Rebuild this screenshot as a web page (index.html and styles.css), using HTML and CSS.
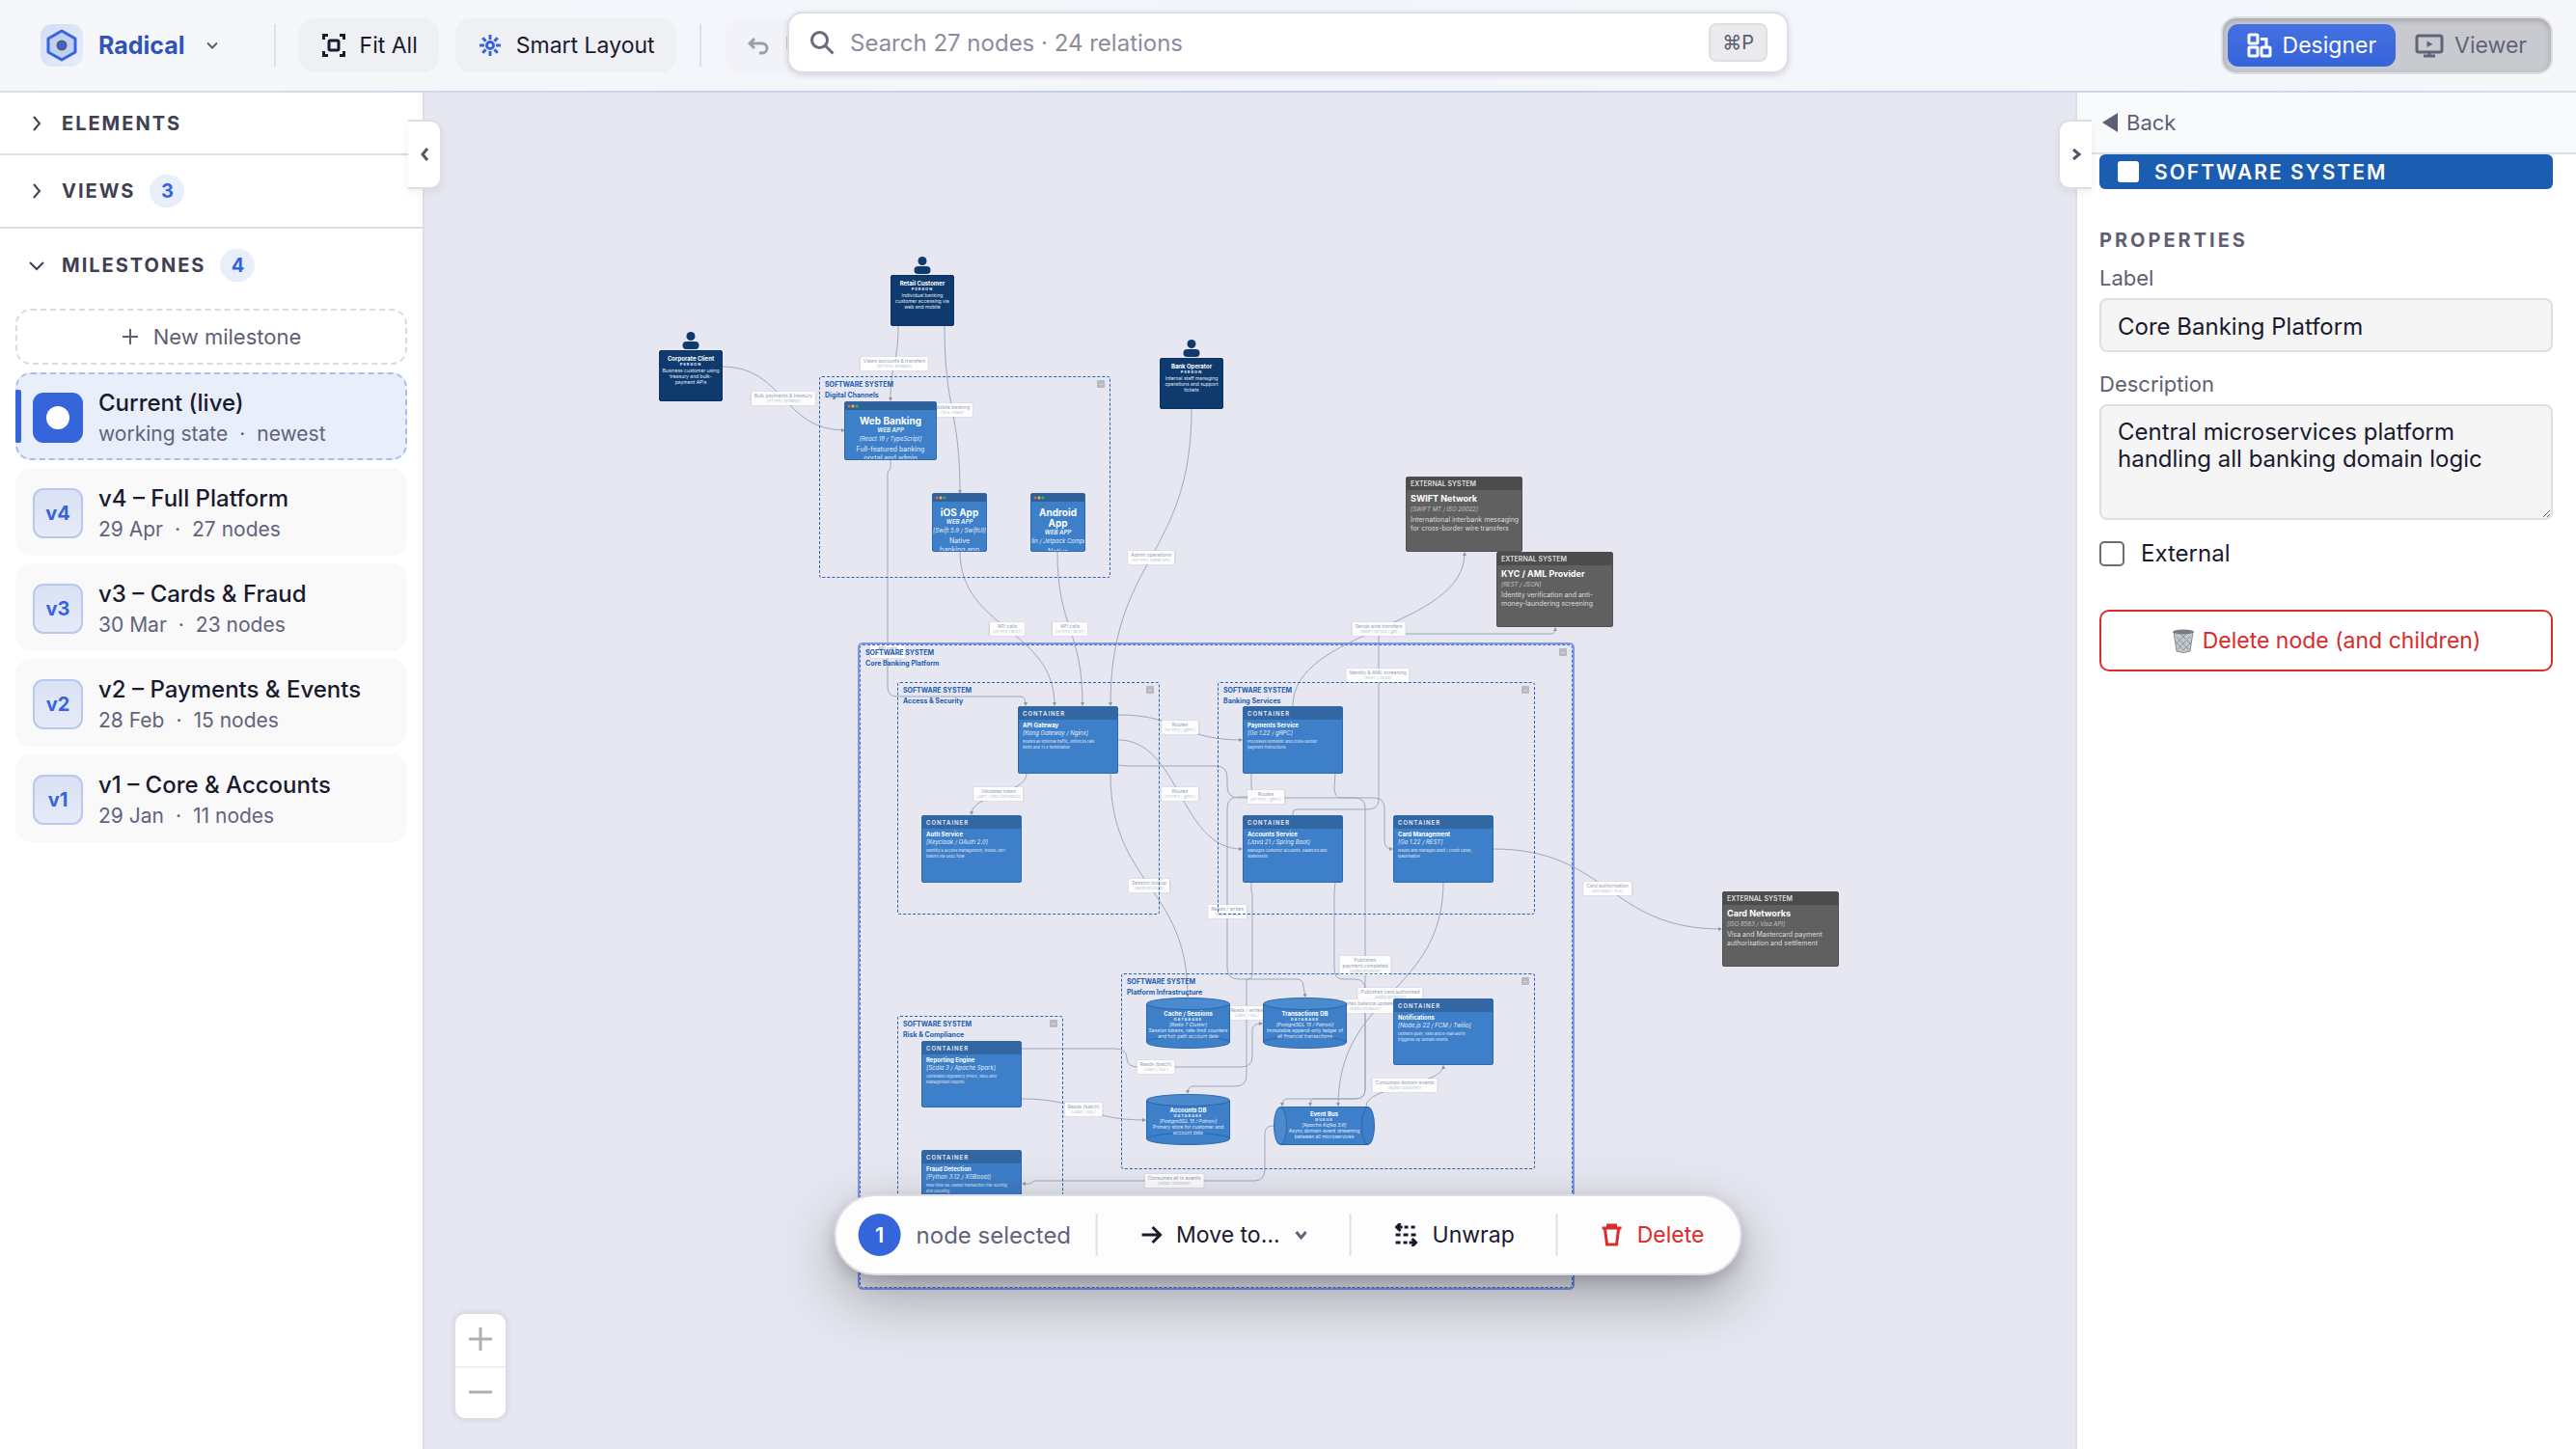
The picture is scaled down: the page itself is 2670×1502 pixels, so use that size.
FILE: index.html
```html
<!DOCTYPE html>
<html lang="en">
<head>
  <meta charset="UTF-8">
  <title>Radical</title>
  <meta name="viewport" content="width=device-width, initial-scale=1.0">
  <link rel="stylesheet" href="styles.css">
</head>
<body>

  <header class="topbar">
    <button class="brand">
      <span class="logo">
        <svg viewBox="0 0 44 44" width="44" height="44"><path d="M22 7l14 8v14l-14 8-14-8V15z" fill="#c0d0f2" stroke="#3564db" stroke-width="3" stroke-linejoin="round"/><circle cx="22" cy="22" r="4.5" fill="#3564db"/></svg>
      </span>
      <span class="brand-name">Radical</span>
      <svg class="brand-caret" viewBox="0 0 12 12" width="12" height="12"><path d="M1 3.5l5 5 5-5"/></svg>
    </button>
    <span class="divider"></span>
    <button class="tool">
      <svg viewBox="0 0 24 24" width="24" height="24"><path d="M1.5 6V1.5H6M18 1.5h4.5V6M22.5 18v4.5H18M6 22.5H1.5V18"/><rect x="7" y="7" width="10" height="10" rx="1.5"/></svg>
      Fit All
    </button>
    <button class="tool smart">
      <svg viewBox="0 0 24 24" width="24" height="24"><circle cx="12" cy="12" r="3.5"/><path d="M12 1v5M12 18v5M1 12h5M18 12h5M4.2 4.2l3.4 3.4M16.4 16.4l3.4 3.4M4.2 19.8l3.4-3.4M16.4 7.6l3.4-3.4"/></svg>
      Smart Layout
    </button>
    <span class="divider"></span>
    <button class="tool" disabled>
      <svg viewBox="0 0 24 24" width="24" height="24"><path d="M7 5L2 10l5 5M2 10h13a5 5 0 0 1 0 10h-3"/></svg>
      Undo
    </button>

    <div class="modes">
      <button class="mode active">
        <svg viewBox="0 0 26 26" width="26" height="26"><rect x="2" y="2" width="9" height="9" rx="1"/><rect x="2" y="15" width="9" height="9" rx="1"/><rect x="15" y="15" width="9" height="9" rx="1"/><path d="M14 6.5h6V15"/></svg>
        Designer
      </button>
      <button class="mode">
        <svg viewBox="0 0 30 26" width="30" height="26"><rect x="2" y="3" width="26" height="17" rx="2"/><path d="M15 20v4M9 24h12"/><path d="M12.5 8.5l6 3.2-6 3.2z" fill="currentColor" stroke="none"/></svg>
        Viewer
      </button>
    </div>
  </header>

  <div class="search">
    <svg viewBox="0 0 26 26" width="26" height="26"><circle cx="10.5" cy="10.5" r="8"/><path d="M16.5 16.5l8 8"/></svg>
    <input type="text" aria-label="Search" placeholder="Search 27 nodes · 24 relations">
    <kbd>⌘P</kbd>
  </div>

  <div class="workspace">
    <aside class="sidebar">
      <button class="section first">
        <svg viewBox="0 0 16 16" width="16" height="16"><path d="M5 1l6 7-6 7"/></svg>
        Elements
      </button>
      <button class="section">
        <svg viewBox="0 0 16 16" width="16" height="16"><path d="M5 1l6 7-6 7"/></svg>
        Views <span class="count">3</span>
      </button>
      <button class="section open">
        <svg viewBox="0 0 16 16" width="16" height="16"><path d="M1 5l7 7 7-7"/></svg>
        Milestones <span class="count">4</span>
      </button>

      <div class="milestones">
        <button class="new-milestone">
          <svg viewBox="0 0 18 18" width="18" height="18"><path d="M9 1v16M1 9h16"/></svg>
          New milestone
        </button>
        <button class="milestone current">
          <span class="version"><span class="live-dot"></span></span>
          <span class="info"><strong>Current (live)</strong><small>working state<i>·</i>newest</small></span>
        </button>
        <button class="milestone">
          <span class="version">v4</span>
          <span class="info"><strong>v4 – Full Platform</strong><small>29 Apr<i>·</i>27 nodes</small></span>
        </button>
        <button class="milestone">
          <span class="version">v3</span>
          <span class="info"><strong>v3 – Cards &amp; Fraud</strong><small>30 Mar<i>·</i>23 nodes</small></span>
        </button>
        <button class="milestone">
          <span class="version">v2</span>
          <span class="info"><strong>v2 – Payments &amp; Events</strong><small>28 Feb<i>·</i>15 nodes</small></span>
        </button>
        <button class="milestone">
          <span class="version">v1</span>
          <span class="info"><strong>v1 – Core &amp; Accounts</strong><small>29 Jan<i>·</i>11 nodes</small></span>
        </button>
      </div>
      <button class="collapse left" aria-label="Collapse sidebar">
        <svg viewBox="0 0 16 16" width="16" height="16"><path d="M11 2L6 8l5 6"/></svg>
      </button>
    </aside>

    <main class="canvas" id="canvas">
      <div class="zoom-controls">
        <button aria-label="Zoom in"><svg viewBox="0 0 24 24" width="24" height="24"><path d="M12 0v24M0 12h24"/></svg></button>
        <button aria-label="Zoom out"><svg viewBox="0 0 24 24" width="24" height="24"><path d="M0 12h24"/></svg></button>
      </div>
    </main>

    <aside class="panel">
      <a class="back" href="#">
        <svg viewBox="0 0 16 20" width="16" height="20"><path d="M16 0v20L0 10z"/></svg>
        Back
      </a>
      <div class="panel-body">
        <div class="type-bar"><span class="type-icon"></span>Software System</div>
        <h2>Properties</h2>
        <label for="nodeLabel">Label</label>
        <input type="text" id="nodeLabel" value="Core Banking Platform">
        <label for="nodeDesc">Description</label>
        <textarea id="nodeDesc">Central microservices platform handling all banking domain logic</textarea>
        <label class="check"><input type="checkbox"> External</label>
        <button class="delete-node">
          <svg viewBox="0 0 24 26" width="24" height="26"><path d="M2 4h20l-3 20q-7 3-14 0z" fill="#c3c8cc" stroke="#858b90" stroke-width="1"/><path d="M5 9l13 14M9 6l11 11M4 14l8 9M19 9L6 22M15 6L5 16M20 15l-8 8" stroke="#8d9499" stroke-width="1"/><ellipse cx="12" cy="4" rx="11" ry="2.5" fill="#777d82" stroke="none"/></svg>
          Delete node (and children)
        </button>
      </div>
      <button class="collapse right" aria-label="Collapse panel">
        <svg viewBox="0 0 16 16" width="16" height="16"><path d="M5 3l6 5-6 5"/></svg>
      </button>
    </aside>
  </div>

  <div class="selection-bar">
    <span class="selected-count">1</span>
    <span class="selected-text">node selected</span>
    <span class="divider"></span>
    <button>
      <svg viewBox="0 0 22 22" width="22" height="22"><path d="M1 11h19M12 3l8 8-8 8"/></svg>
      Move to…
      <svg class="caret" viewBox="0 0 14 14" width="14" height="14"><path d="M2 4l5 6 5-6"/></svg>
    </button>
    <span class="divider"></span>
    <button>
      <svg viewBox="0 0 24 24" width="24" height="24"><path d="M6 0L2 4l4 4M2 4h6M10 4h4M17 4h4M1 12h5M9 12h5M17 12h5M1 20h5M9 20h4M15 20h7M18 16l4 4-4 4"/></svg>
      Unwrap
    </button>
    <span class="divider"></span>
    <button class="danger">
      <svg viewBox="0 0 22 24" width="22" height="24"><path d="M1 5h20M7 4V2h8v2M4 6l2 16h10l2-16"/></svg>
      Delete
    </button>
  </div>

  <script src="script.js"></script>
</body>
</html>
```
FILE: styles.css
```css
* {
  box-sizing: border-box;
  font-family: Inter, "Noto Sans", sans-serif;
}

body {
  margin: 0;
  height: 100vh;
  display: flex;
  flex-direction: column;
  overflow: hidden;
  position: relative;
  background: #fff;
  color: #1a1a2e;
  font-size: 24px;
}

button {
  border: none;
  background: none;
  padding: 0;
  color: inherit;
  font-size: 23px;
  cursor: pointer;
}

svg {
  fill: none;
  stroke: currentColor;
  stroke-width: 2;
  flex-shrink: 0;
}

/* Top bar */
.topbar {
  display: flex;
  align-items: center;
  height: 96px;
  padding: 0 24px 0 42px;
  background: linear-gradient(to right, #f6f7fa, #f3f5fc 50%, #f6f7fb);
  border-bottom: 2px solid;
  border-image: linear-gradient(to right, #dcdfe8, #bfcbe8 50%, #d8dbea) 1;
}

.brand {
  display: flex;
  align-items: center;
  gap: 16px;
  margin-right: 58px;
  color: #5c5c70;
}

.logo {
  height: 44px;
  border-radius: 12px;
  background: linear-gradient(135deg, #d3ddf5, #e6edfa);
}

.brand-name {
  font-size: 25px;
  font-weight: 700;
  color: #2f55b8;
}

.brand-caret {
  margin-left: 6px;
}

.divider {
  width: 2px;
  height: 44px;
  background: #dfe0e8;
}

.tool {
  display: flex;
  align-items: center;
  gap: 15px;
  height: 56px;
  margin-left: 24px;
  padding: 0 22px 0 24px;
  border-radius: 16px;
  background: #eff0f4;
}

.tool svg {
  stroke-width: 3;
}

.tool + .tool {
  margin-left: 17px;
}

.tool.smart svg {
  color: #3564db;
}

.tool + .divider {
  margin-left: 24px;
}

.tool:disabled {
  opacity: .4;
}

.modes {
  display: flex;
  align-items: center;
  height: 60px;
  margin-left: auto;
  padding: 0 5px;
  border: 2px solid #dcdde2;
  border-radius: 16px;
  background: #c9cacf;
  box-shadow: inset 0 2px 6px rgba(0,0,0,0.2);
}

.mode {
  display: flex;
  align-items: center;
  gap: 11px;
  height: 44px;
  padding: 0 20px;
  border-radius: 11px;
  color: #62637a;
}

.mode svg {
  stroke-width: 3;
}

.mode.active {
  background: linear-gradient(#4470e0, #3564db);
  color: #fff;
}

/* Search lies over the top bar */
.search {
  position: absolute;
  top: 12px;
  left: 50%;
  transform: translateX(-50%);
  z-index: 2;
  display: flex;
  align-items: center;
  gap: 16px;
  width: 1038px;
  max-width: 60%;
  height: 64px;
  padding: 0 20px 0 21px;
  border: 2px solid #dcdfe8;
  border-radius: 16px;
  background: #fff;
  box-shadow: 0 2px 6px rgba(0,0,0,0.14);
  color: #6a6a7a;
}

.search svg {
  stroke-width: 3;
}

.search input {
  flex: 1;
  border: none;
  outline: none;
  background: none;
  padding: 0;
  font-size: 24px;
}

.search input::placeholder {
  color: #8c8c9c;
}

.search kbd {
  padding: 0 12px;
  border: 2px solid #dcdfe5;
  border-radius: 8px;
  background: #ebebee;
  font-size: 20px;
  line-height: 36px;
  color: #5c5c70;
}

.workspace {
  flex: 1;
  display: flex;
  min-height: 0;
}

/* Sidebar */
.sidebar {
  position: relative;
  z-index: 1;
  width: 440px;
  flex-shrink: 0;
  border-right: 2px solid #dcdfe6;
  background: #fff;
}

.section {
  display: flex;
  align-items: center;
  width: 100%;
  height: 76px;
  padding: 0 30px;
  border-bottom: 2px solid #dcdfe6;
  font-size: 20px;
  font-weight: 700;
  letter-spacing: 2px;
  text-transform: uppercase;
  color: #3f4052;
}

.section svg {
  margin-right: 18px;
}

.section.first {
  height: 65px;
}

.section.open {
  height: 75px;
  border-bottom: none;
}

.count {
  margin-left: 15px;
  width: 36px;
  border-radius: 17px;
  background: #e9eefb;
  color: #3564db;
  line-height: 34px;
  letter-spacing: 0;
  text-align: center;
}

.milestones {
  display: flex;
  flex-direction: column;
  gap: 8px;
  padding: 8px 16px;
}

.new-milestone {
  display: flex;
  align-items: center;
  justify-content: center;
  gap: 15px;
  height: 58px;
  border: 2px dashed #d9dbe2;
  border-radius: 16px;
  font-size: 22px;
  color: #5f5f73;
}

.milestone {
  position: relative;
  display: flex;
  align-items: center;
  gap: 16px;
  height: 91px;
  padding: 2px 16px 0;
  border: 2px solid transparent;
  border-radius: 16px;
  background: #f9f9fa;
  text-align: left;
}

.milestone.current {
  border: 2px dashed #a9bdf0;
  background: #e9eefb;
}

.milestone.current::before {
  content: "";
  position: absolute;
  left: -2px;
  top: 16px;
  width: 6px;
  height: 55px;
  border-radius: 2px;
  background: #3564db;
}

.version {
  display: flex;
  align-items: center;
  justify-content: center;
  width: 52px;
  height: 52px;
  border: 2px solid #b9c8ee;
  border-radius: 11px;
  background: linear-gradient(#d9e1f4, #e6ebf8);
  font-size: 20px;
  font-weight: 700;
  color: #3564db;
}

.current .version {
  border: none;
  background: #3564db;
}

.live-dot {
  width: 24px;
  height: 24px;
  border-radius: 50%;
  background: #fff;
}

.info strong,
.info small {
  display: block;
}

.info strong {
  font-size: 24px;
  line-height: 34px;
  font-weight: 500;
}

.info small {
  font-size: 21px;
  line-height: 30px;
  color: #62637a;
}

.info i {
  margin: 0 12px;
  font-style: normal;
}

.collapse {
  position: absolute;
  top: 28px;
  display: flex;
  align-items: center;
  justify-content: center;
  width: 35px;
  height: 72px;
  border: 2px solid #dcdfe6;
  background: #fff;
  box-shadow: 0 4px 8px rgba(0,0,0,0.06);
  color: #55566a;
}

.collapse svg {
  stroke-width: 3;
}

.collapse.left {
  right: -20px;
  border-left: none;
  border-radius: 0 12px 12px 0;
}

.collapse.right {
  left: -20px;
  border-right: none;
  border-radius: 12px 0 0 12px;
}

/* Canvas */
.canvas {
  position: relative;
  flex: 1;
  overflow: hidden;
  background: #e6e7f0;
}

.edges {
  position: absolute;
  left: 0;
  top: 0;
  color: #9ba9bd;
  stroke-width: 1;
}

.edges marker path {
  fill: #8797b0;
  stroke: none;
}

.edge-label {
  position: absolute;
  transform: translate(-50%, -50%);
  padding: 1px 3px;
  border-radius: 1px;
  background: #fdfdfe;
  box-shadow: 0 0 2px rgba(0,0,0,0.12);
  font-size: 5px;
  line-height: 6px;
  text-align: center;
  white-space: nowrap;
  color: #94a0b6;
}

.edge-label em {
  display: block;
  font-size: 4px;
  color: #b3bdcc;
}

.group {
  position: absolute;
  border: 1px dashed #2465b5;
  border-radius: 3px;
  padding: 4px 5px;
  color: #1d5db0;
  font-size: 7px;
  line-height: 12px;
  font-weight: 700;
}

.group span {
  display: block;
  margin-bottom: 1px;
  line-height: 8px;
}

.group.selected {
  border-color: #3f6be0;
  outline: 2px solid #7d98e6;
}

.group::after {
  content: "–";
  position: absolute;
  top: 3px;
  right: 5px;
  width: 8px;
  height: 8px;
  border-radius: 1px;
  background: #b9babf;
  color: #e6e7f0;
  font-size: 6px;
  line-height: 8px;
  text-align: center;
}

.node {
  position: absolute;
  border: 1px solid #2f69ae;
  border-radius: 2px;
  background: #3d7fc9;
  color: #e3edf8;
  font-size: 5px;
  line-height: 6px;
  white-space: nowrap;
}

.node b,
.node u,
.node em {
  display: block;
}

.node u {
  text-decoration: none;
  font-weight: 700;
}

.node b {
  color: #fff;
}

.person {
  padding-top: 4px;
  border-color: #0b3263;
  background: #0f3a6d;
  text-align: center;
}

.person b {
  font-size: 6px;
  line-height: 7px;
}

.person u {
  font-size: 4px;
  letter-spacing: 1px;
}

.person::before,
.person::after {
  content: "";
  position: absolute;
  left: 50%;
  transform: translateX(-50%);
  background: #0f3a6d;
}

.person::before {
  top: -20px;
  width: 9px;
  height: 9px;
  border-radius: 50%;
}

.person::after {
  top: -10px;
  width: 17px;
  height: 8px;
  border-radius: 4px;
}

.app {
  overflow: hidden;
  text-align: center;
  font-size: 7px;
  line-height: 9px;
}

.app::before {
  content: "";
  display: block;
  height: 8px;
  margin-bottom: 6px;
  background:
    radial-gradient(circle at 4px 4px, #ee5a52 1px, transparent 2px),
    radial-gradient(circle at 8px 4px, #f0b13c 1px, transparent 2px),
    radial-gradient(circle at 12px 4px, #35b54a 1px, transparent 2px),
    #2f6199;
}

.app b {
  font-size: 10px;
  line-height: 11px;
}

.app u {
  font-size: 6px;
  font-style: italic;
  line-height: 8px;
}

.app em {
  display: flex;
  justify-content: center;
  margin-bottom: 2px;
  font-size: 6px;
  line-height: 9px;
}

.container u,
.external u {
  height: 13px;
  margin-bottom: 3px;
  padding-left: 4px;
  background: #3367a3;
  font-size: 6px;
  line-height: 14px;
  letter-spacing: 1px;
  font-weight: 600;
}

.container b,
.container em,
.container p {
  padding-left: 4px;
}

.container b {
  font-size: 6px;
}

.container em {
  font-size: 6px;
  line-height: 9px;
}

.node p {
  margin: 0;
}

.container p {
  margin-top: 2px;
  font-size: 4px;
}

.external {
  border-color: #505050;
  background: #606060;
  color: #dedede;
  font-size: 7px;
  line-height: 9px;
}

.external u {
  background: #4c4c4c;
  font-size: 7px;
  letter-spacing: 0;
}

.external b,
.external em,
.external p {
  padding-left: 4px;
}

.external b {
  font-size: 9px;
  line-height: 12px;
}

.external em {
  margin-bottom: 2px;
  font-size: 6px;
  color: #c4c4c4;
}

.database,
.queue {
  border: none;
  background: none;
  text-align: center;
}

.database svg,
.queue svg {
  position: absolute;
  left: 0;
  top: 0;
  fill: #3d7fc9;
  color: #2c67ac;
  stroke-width: 1;
}

.database div,
.queue div {
  position: relative;
}

.database div {
  padding-top: 13px;
}

.queue div {
  padding-top: 4px;
}

.database b,
.queue b {
  font-size: 6px;
  line-height: 7px;
}

.database u,
.queue u {
  font-size: 4px;
  line-height: 5px;
  letter-spacing: 1px;
}

.zoom-controls {
  position: absolute;
  left: 32px;
  bottom: 32px;
  width: 52px;
  border-radius: 10px;
  background: #fff;
  box-shadow: 0 0 6px 2px rgba(0,0,0,0.08);
  color: #aeaeb4;
}

.zoom-controls button {
  display: flex;
  align-items: center;
  justify-content: center;
  width: 52px;
  height: 54px;
  padding-bottom: 2px;
}

.zoom-controls button + button {
  border-top: 2px solid #eeeff6;
}

.zoom-controls svg {
  stroke-width: 3;
}

/* Properties panel */
.panel {
  position: relative;
  width: 519px;
  flex-shrink: 0;
  border-left: 2px solid #dcdfe6;
  background: #fff;
}

.back {
  display: flex;
  align-items: center;
  gap: 9px;
  height: 64px;
  padding-left: 26px;
  border-bottom: 2px solid #dcdfe6;
  background: #f9fafc;
  color: #5f5f73;
  font-size: 22px;
  text-decoration: none;
}

.back svg {
  fill: currentColor;
  stroke: none;
}

.panel-body {
  display: flex;
  flex-direction: column;
  padding: 0 24px 0 23px;
}

.type-bar {
  display: flex;
  align-items: center;
  gap: 16px;
  height: 36px;
  padding-left: 19px;
  border-radius: 6px;
  background: #1b5db1;
  color: #fff;
  font-size: 21px;
  font-weight: 600;
  letter-spacing: 2px;
  text-transform: uppercase;
}

.type-icon {
  width: 22px;
  height: 22px;
  border-radius: 3px;
  background: #fff;
}

.panel h2 {
  margin: 39px 0 10px;
  font-size: 20px;
  line-height: 28px;
  font-weight: 700;
  letter-spacing: 3px;
  text-transform: uppercase;
  color: #5f5f73;
}

.panel label {
  font-size: 22px;
  line-height: 30px;
  margin-bottom: 6px;
  color: #5f5f73;
}

.panel input[type="text"],
.panel textarea {
  width: 100%;
  padding: 13px 17px 11px;
  border: 2px solid #dcdfe6;
  border-radius: 8px;
  background: #f5f5f6;
  color: #1a1a2e;
  font-size: 24px;
  line-height: 28px;
}

.panel input[type="text"] {
  height: 56px;
  margin-bottom: 18px;
}

.panel textarea {
  display: block;
  height: 120px;
  resize: vertical;
}

.panel label.check {
  display: flex;
  align-items: center;
  gap: 17px;
  margin: 20px 0 43px;
  font-size: 24px;
  color: #1a1a2e;
}

.check input {
  appearance: none;
  width: 26px;
  height: 26px;
  margin: 0;
  border: 2px solid #6c6c74;
  border-radius: 5px;
  background: #fff;
}

.delete-node {
  display: flex;
  align-items: center;
  justify-content: center;
  gap: 8px;
  height: 64px;
  border: 2px solid #d92c2c;
  border-radius: 10px;
  color: #d92c2c;
}

/* Floating bar shown while nodes are selected */
.selection-bar {
  position: absolute;
  left: 50%;
  bottom: 180px;
  transform: translateX(-50%);
  z-index: 2;
  display: flex;
  align-items: center;
  height: 84px;
  padding: 0 37px 0 23px;
  border: 2px solid #dcdfe6;
  border-radius: 42px;
  background: #fdfdfe;
  box-shadow: 0 24px 64px rgba(0,0,0,0.3), 0 6px 16px rgba(0,0,0,0.16);
}

.selected-count {
  width: 44px;
  border-radius: 50%;
  background: #3564db;
  color: #fff;
  font-size: 22px;
  line-height: 44px;
  font-weight: 600;
  text-align: center;
}

.selected-text {
  margin: 0 25px 0 16px;
  color: #62637a;
}

.selection-bar button {
  display: flex;
  align-items: center;
  gap: 15px;
  margin-left: 45px;
  white-space: nowrap;
}

.selection-bar button + .divider {
  margin-left: 43px;
}

.selection-bar svg {
  stroke-width: 3;
}

.selection-bar .caret {
  color: #62637a;
}

.selection-bar .danger {
  color: #d92c2c;
}
```
FILE: script.js
```js
const canvas = document.getElementById('canvas');
const pan = { x: 440, y: 96 };

const groups = [
  { name: 'Digital Channels', x: 849, y: 390, w: 302, h: 209 },
  { name: 'Core Banking Platform', x: 891, y: 668, w: 739, h: 667, selected: true },
  { name: 'Access & Security', x: 930, y: 707, w: 272, h: 241 },
  { name: 'Banking Services', x: 1262, y: 707, w: 329, h: 241 },
  { name: 'Platform Infrastructure', x: 1162, y: 1009, w: 429, h: 203 },
  { name: 'Risk & Compliance', x: 930, y: 1053, w: 172, h: 247 }
];

// kind, x, y, width, height, name, type, technology, description
const nodes = [
  ['person', 923, 285, 66, 53, 'Retail Customer', 'PERSON', '', 'Individual banking<br>customer accessing via<br>web and mobile'],
  ['person', 683, 363, 66, 53, 'Corporate Client', 'PERSON', '', 'Business customer using<br>treasury and bulk-<br>payment APIs'],
  ['person', 1202, 371, 66, 53, 'Bank Operator', 'PERSON', '', 'Internal staff managing<br>operations and support<br>tickets'],
  ['app', 875, 416, 96, 61, 'Web Banking', 'WEB APP', '[React 18 / TypeScript]', 'Full-featured banking<br>portal and admin'],
  ['app', 966, 511, 57, 61, 'iOS App', 'WEB APP', '[Swift 5.9 / SwiftUI]', 'Native<br>banking app'],
  ['app', 1068, 511, 57, 61, 'Android<br>App', 'WEB APP', '[Kotlin / Jetpack Compose]', 'Native'],
  ['external', 1457, 494, 121, 78, 'SWIFT Network', 'EXTERNAL SYSTEM', '[SWIFT MT / ISO 20022]', 'International interbank messaging<br>for cross-border wire transfers'],
  ['external', 1551, 572, 121, 78, 'KYC / AML Provider', 'EXTERNAL SYSTEM', '[REST / JSON]', 'Identity verification and anti-<br>money-laundering screening'],
  ['external', 1785, 924, 121, 78, 'Card Networks', 'EXTERNAL SYSTEM', '[ISO 8583 / Visa API]', 'Visa and Mastercard payment<br>authorisation and settlement'],
  ['container', 1055, 732, 104, 70, 'API Gateway', 'CONTAINER', '[Kong Gateway / Nginx]', 'Routes all external traffic, enforces rate<br>limits and TLS termination'],
  ['container', 955, 845, 104, 70, 'Auth Service', 'CONTAINER', '[Keycloak / OAuth 2.0]', 'Identity &amp; access management, issues JWT<br>tokens via OIDC flow'],
  ['container', 1288, 732, 104, 70, 'Payments Service', 'CONTAINER', '[Go 1.22 / gRPC]', 'Processes domestic and cross-border<br>payment instructions'],
  ['container', 1288, 845, 104, 70, 'Accounts Service', 'CONTAINER', '[Java 21 / Spring Boot]', 'Manages customer accounts, balances and<br>statements'],
  ['container', 1444, 845, 104, 70, 'Card Management', 'CONTAINER', '[Go 1.22 / REST]', 'Issues and manages debit / credit cards,<br>tokenisation'],
  ['container', 1444, 1035, 104, 69, 'Notifications', 'CONTAINER', '[Node.js 22 / FCM / Twilio]', 'Delivers push, SMS and e-mail alerts<br>triggered by domain events'],
  ['container', 955, 1079, 104, 69, 'Reporting Engine', 'CONTAINER', '[Scala 3 / Apache Spark]', 'Generates regulatory (PSD2, EBA) and<br>management reports'],
  ['container', 955, 1192, 104, 69, 'Fraud Detection', 'CONTAINER', '[Python 3.12 / XGBoost]', 'Real-time ML-based transaction risk scoring<br>and blocking'],
  ['database', 1188, 1034, 87, 53, 'Cache / Sessions', 'DATABASE', '[Redis 7 Cluster]', 'Session tokens, rate-limit counters<br>and hot-path account data'],
  ['database', 1309, 1034, 87, 53, 'Transactions DB', 'DATABASE', '[PostgreSQL 15 / Patroni]', 'Immutable append-only ledger of<br>all financial transactions'],
  ['database', 1188, 1134, 87, 53, 'Accounts DB', 'DATABASE', '[PostgreSQL 15 / Patroni]', 'Primary store for customer and<br>account data'],
  ['queue', 1320, 1147, 105, 40, 'Event Bus', 'QUEUE', '[Apache Kafka 3.6]', 'Async domain-event streaming<br>between all microservices']
];

// label centre x, centre y, text, technology
const labels = [
  [812, 413, 'Bulk payments &amp; treasury', '[HTTPS / Browser]'],
  [927, 377, 'Views accounts &amp; transfers', '[HTTPS / Browser]'],
  [987, 425, 'Mobile banking', '[TLS / Push]'],
  [1193, 578, 'Admin operations', '[HTTPS / Admin API]'],
  [1044, 652, 'API calls', '[HTTPS / REST]'],
  [1109, 652, 'API calls', '[HTTPS / REST]'],
  [920, 675, 'API calls', '[HTTPS / REST]'],
  [1223, 754, 'Routes', '[HTTP/2 / gRPC]'],
  [1223, 823, 'Routes', '[HTTP/2 / gRPC]'],
  [1312, 826, 'Routes', '[HTTP/2 / gRPC]'],
  [1035, 823, 'Validates token', '[JWT / OIDC introspect]'],
  [1191, 918, 'Session lookup', '[Redis protocol]'],
  [1272, 945, 'Reads / writes', '[JDBC / SQL]'],
  [1292, 1050, 'Reads / writes', '[JDBC / SQL]'],
  [1429, 652, 'Sends wire transfers', '[SWIFT MT103 / gpi]'],
  [1428, 700, 'Identity &amp; AML screening', '[REST / JSON]'],
  [1415, 1001, 'Publishes<br>payment.completed', '[Kafka producer]'],
  [1441, 1031, 'Publishes card.authorised', '[Kafka producer]'],
  [1415, 1043, 'Publishes balance.updated', '[Kafka producer]'],
  [1198, 1106, 'Reads (batch)', '[JDBC / SQL]'],
  [1123, 1150, 'Reads (batch)', '[JDBC / SQL]'],
  [1456, 1125, 'Consumes domain events', '[Kafka consumer]'],
  [1217, 1224, 'Consumes all tx events', '[Kafka consumer]'],
  [1666, 921, 'Card authorisation', '[ISO 8583 / TLS]']
];

const edges = [
  'M749 380C812 380 812 446 875 446',
  'M931 338C931 377 923 377 923 415',
  'M979 338C979 425 995 425 995 511',
  'M923 477V486L920 489V712Q920 722 930 722H1058Q1063 722 1063 731',
  'M995 572C995 652 1093 652 1093 731',
  'M1096 572C1096 652 1122 652 1122 731',
  'M1235 424C1235 578 1151 578 1151 731',
  'M1340 732C1340 652 1518 652 1518 573',
  'M1340 845V843Q1340 839 1344 839H1417Q1429 839 1429 829V661Q1429 657 1433 657H1608Q1612 657 1612 651',
  'M1159 741C1223 741 1223 767 1287 767',
  'M1159 767C1223 767 1223 880 1287 880',
  'M1159 793L1168 794H1260Q1272 794 1272 806V815Q1272 827 1284 827H1424Q1435 827 1435 838V872Q1435 880 1443 880',
  'M1064 802C1064 823 1007 823 1007 844',
  'M1151 802C1151 918 1231 918 1231 1033',
  'M1297 802V814L1298 826H1284Q1272 826 1272 838V1003Q1272 1015 1284 1015H1344Q1351 1015 1351 1023L1353 1033',
  'M1384 802L1383 816Q1383 827 1390 827H1404Q1415 827 1415 838V1129Q1415 1139 1405 1139H1334Q1329 1139 1329 1146',
  'M1384 914L1383 924V1004Q1383 1015 1392 1015H1404Q1415 1015 1415 1026V1129Q1415 1139 1405 1139H1362Q1358 1139 1358 1146',
  'M1297 914V924L1298 926V1010Q1298 1015 1292 1015V1115Q1292 1126 1280 1126H1237Q1231 1126 1231 1133',
  'M1496 914C1496 1030 1387 1030 1387 1146',
  'M1548 880C1667 880 1667 963 1784 963',
  'M1059 1087H1156Q1168 1087 1168 1097Q1168 1106 1180 1106H1286Q1298 1106 1298 1095V1068Q1298 1061 1308 1061',
  'M1059 1139C1123 1139 1123 1161 1187 1161',
  'M1416 1147C1416 1125 1496 1125 1496 1105',
  'M1320 1167Q1311 1167 1311 1175V1212Q1311 1224 1300 1224H1072L1068 1227H1060'
];

const shapes = {
  database: '<svg viewBox="0 0 87 53" width="87" height="53"><path d="M.5 6.5v40a43 6 0 0 0 86 0v-40"/><ellipse cx="43.5" cy="6.5" rx="43" ry="6" fill="#4b8acf"/><path d="M.5 46.5a43 6 0 0 1 86 0" fill="none"/></svg>',
  queue: '<svg viewBox="0 0 105 40" width="105" height="40"><path d="M7 .5h91v39H7"/><ellipse cx="7" cy="20" rx="6.5" ry="19.5" fill="#4b8acf"/><ellipse cx="98" cy="20" rx="6.5" ry="19.5"/></svg>'
};

function place(className, x, y, w, h) {
  const el = document.createElement('div');
  el.className = className;
  el.style.left = `${x - pan.x}px`;
  el.style.top = `${y - pan.y}px`;
  if (w) {
    el.style.width = `${w}px`;
    el.style.height = `${h}px`;
  }
  canvas.append(el);
  return el;
}

canvas.insertAdjacentHTML('beforeend', `
  <svg class="edges" width="1712" height="1406" viewBox="${pan.x} ${pan.y} 1712 1406">
    <defs><marker id="arrow" viewBox="0 0 4 4" refX="3" refY="2" markerWidth="4" markerHeight="4" orient="auto"><path d="M0 0l4 2-4 2z"/></marker></defs>
    ${edges.map(d => `<path d="${d}" marker-end="url(#arrow)"/>`).join('')}
  </svg>`);

labels.forEach(([x, y, text, tech]) => {
  place('edge-label', x, y).innerHTML = `${text}<em>${tech}</em>`;
});

groups.forEach(g => {
  place(g.selected ? 'group selected' : 'group', g.x, g.y, g.w, g.h).innerHTML = `<span>SOFTWARE SYSTEM</span>${g.name}`;
});

nodes.forEach(([kind, x, y, w, h, name, type, tech, desc]) => {
  const el = place(`node ${kind}`, x, y, w, h);
  const title = `<b>${name}</b>`;
  const kindLine = `<u>${type}</u>`;
  const techLine = tech ? `<em>${tech}</em>` : '';
  // boxes with a header bar put the type above the title
  const head = kind === 'container' || kind === 'external' ? kindLine + title : title + kindLine;
  const body = `${head}${techLine}<p>${desc}</p>`;
  el.innerHTML = shapes[kind] ? `${shapes[kind]}<div>${body}</div>` : body;
});
```
